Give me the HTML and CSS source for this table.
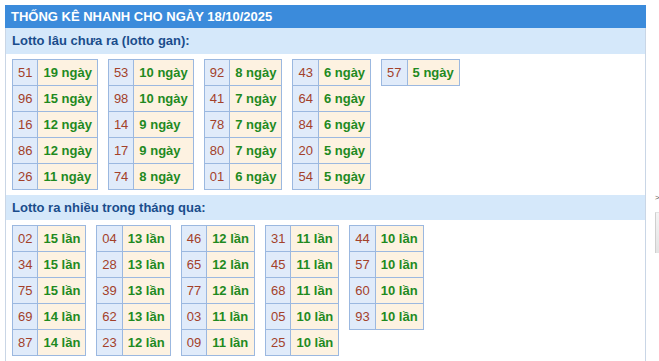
FILE: index.html
```html
<!DOCTYPE html>
<html lang="vi">
<head>
<meta charset="utf-8">
<link rel="stylesheet" href="styles.css">
</head>
<body>
<div class="page">
  <div class="box">
    <div class="title">THỐNG KÊ NHANH CHO NGÀY 18/10/2025</div>
    <div class="sub">Lotto lâu chưa ra (lotto gan):</div>
    <div class="group">
      <table class="lt">
        <tr><td class="n">51</td><td class="v">19 ngày</td></tr>
        <tr><td class="n">96</td><td class="v">15 ngày</td></tr>
        <tr><td class="n">16</td><td class="v">12 ngày</td></tr>
        <tr><td class="n">86</td><td class="v">12 ngày</td></tr>
        <tr><td class="n">26</td><td class="v">11 ngày</td></tr>
      </table>
      <table class="lt">
        <tr><td class="n">53</td><td class="v">10 ngày</td></tr>
        <tr><td class="n">98</td><td class="v">10 ngày</td></tr>
        <tr><td class="n">14</td><td class="v">9 ngày</td></tr>
        <tr><td class="n">17</td><td class="v">9 ngày</td></tr>
        <tr><td class="n">74</td><td class="v">8 ngày</td></tr>
      </table>
      <table class="lt">
        <tr><td class="n">92</td><td class="v">8 ngày</td></tr>
        <tr><td class="n">41</td><td class="v">7 ngày</td></tr>
        <tr><td class="n">78</td><td class="v">7 ngày</td></tr>
        <tr><td class="n">80</td><td class="v">7 ngày</td></tr>
        <tr><td class="n">01</td><td class="v">6 ngày</td></tr>
      </table>
      <table class="lt">
        <tr><td class="n">43</td><td class="v">6 ngày</td></tr>
        <tr><td class="n">64</td><td class="v">6 ngày</td></tr>
        <tr><td class="n">84</td><td class="v">6 ngày</td></tr>
        <tr><td class="n">20</td><td class="v">5 ngày</td></tr>
        <tr><td class="n">54</td><td class="v">5 ngày</td></tr>
      </table>
      <table class="lt">
        <tr><td class="n">57</td><td class="v">5 ngày</td></tr>
      </table>
    </div>
    <div class="sub sub-tight">Lotto ra nhiều trong tháng qua:</div>
    <div class="group">
      <table class="lt">
        <tr><td class="n">02</td><td class="v">15 lần</td></tr>
        <tr><td class="n">34</td><td class="v">15 lần</td></tr>
        <tr><td class="n">75</td><td class="v">15 lần</td></tr>
        <tr><td class="n">69</td><td class="v">14 lần</td></tr>
        <tr><td class="n">87</td><td class="v">14 lần</td></tr>
      </table>
      <table class="lt">
        <tr><td class="n">04</td><td class="v">13 lần</td></tr>
        <tr><td class="n">28</td><td class="v">13 lần</td></tr>
        <tr><td class="n">39</td><td class="v">13 lần</td></tr>
        <tr><td class="n">62</td><td class="v">13 lần</td></tr>
        <tr><td class="n">23</td><td class="v">12 lần</td></tr>
      </table>
      <table class="lt">
        <tr><td class="n">46</td><td class="v">12 lần</td></tr>
        <tr><td class="n">65</td><td class="v">12 lần</td></tr>
        <tr><td class="n">77</td><td class="v">12 lần</td></tr>
        <tr><td class="n">03</td><td class="v">11 lần</td></tr>
        <tr><td class="n">09</td><td class="v">11 lần</td></tr>
      </table>
      <table class="lt">
        <tr><td class="n">31</td><td class="v">11 lần</td></tr>
        <tr><td class="n">45</td><td class="v">11 lần</td></tr>
        <tr><td class="n">68</td><td class="v">11 lần</td></tr>
        <tr><td class="n">05</td><td class="v">10 lần</td></tr>
        <tr><td class="n">25</td><td class="v">10 lần</td></tr>
      </table>
      <table class="lt">
        <tr><td class="n">44</td><td class="v">10 lần</td></tr>
        <tr><td class="n">57</td><td class="v">10 lần</td></tr>
        <tr><td class="n">60</td><td class="v">10 lần</td></tr>
        <tr><td class="n">93</td><td class="v">10 lần</td></tr>
      </table>
    </div>
  </div>
  <div class="side">
    <div class="arrow">&gt;</div>
    <div class="sidebox"></div>
  </div>
</div>
</body>
</html>
```
FILE: styles.css
```css
html, body {
  margin: 0;
  padding: 0;
  background: #ffffff;
}
body {
  font-family: "Liberation Sans", Arial, sans-serif;
  font-size: 13px;
  overflow: hidden;
}
.page {
  display: flex;
  align-items: flex-start;
  padding: 5px 0 0 5px;
  height: 356px;
  overflow: hidden;
}
.box {
  width: 639px;
  height: 400px;
  border-left: 1px solid #c9d6e6;
  border-right: 1px solid #c9d6e6;
  flex: none;
}
.title {
  background: #3b8bdb;
  color: #ffffff;
  font-weight: bold;
  font-size: 13px;
  height: 23px;
  line-height: 23px;
  margin: 0 -1px;
  padding-left: 6px;
}
.sub {
  background: #d5e8fa;
  color: #1a4d8c;
  font-weight: bold;
  font-size: 13px;
  height: 26px;
  line-height: 26px;
  padding-left: 6px;
}
.sub-tight {
  height: 25px;
  line-height: 25px;
}
.group {
  display: flex;
  align-items: flex-start;
  gap: 10px;
  padding: 5px 6px 5px 6px;
}
.lt {
  border-collapse: collapse;
}
.lt td {
  border: 1px solid #9bb8e0;
  height: 25px;
  padding: 0 5px;
  font-size: 13px;
  white-space: nowrap;
}
.lt .n {
  background: #e0ebfa;
  color: #a3412a;
}
.lt .v {
  background: #fdf2e1;
  color: #1f8a1f;
  font-weight: bold;
}
.side {
  margin-left: 9px;
  padding-top: 187px;
  width: 4px;
  flex: none;
}
.arrow {
  color: #555;
  font-size: 8px;
  line-height: 12px;
}
.sidebox {
  margin-top: 8px;
  height: 40px;
  border-left: 1px solid #cfcfcf;
  border-top: 1px solid #e2e2e2;
  background: linear-gradient(#f4f4f4, #e4e4e4);
}
```
